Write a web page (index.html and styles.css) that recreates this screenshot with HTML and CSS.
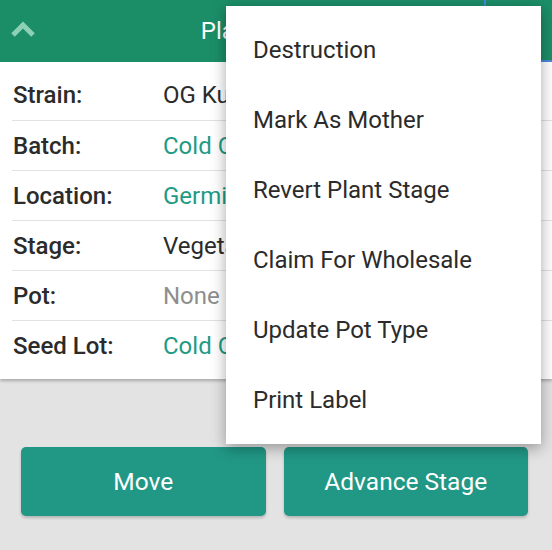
FILE: index.html
```html
<!DOCTYPE html>
<html>
<head>
<meta charset="utf-8">
<link rel="stylesheet" href="styles.css">
</head>
<body>
<div class="page">
  <header class="header">
    <svg class="chev" width="24" height="16" viewBox="0 0 24 16"><path d="M2 14 L12 4 L22 14" fill="none" stroke="#8ed0b6" stroke-width="5"/></svg>
    <div class="title">Plant Details</div>
    <div class="menu-btn"></div>
  </header>
  <section class="card">
    <div class="row"><span class="label">Strain:</span><span class="value">OG Kush</span></div>
    <div class="row"><span class="label">Batch:</span><span class="value link">Cold Creek</span></div>
    <div class="row"><span class="label">Location:</span><span class="value link">Germination</span></div>
    <div class="row"><span class="label">Stage:</span><span class="value">Vegetative</span></div>
    <div class="row"><span class="label">Pot:</span><span class="value muted">None</span></div>
    <div class="row"><span class="label">Seed Lot:</span><span class="value link">Cold Creek</span></div>
  </section>
  <div class="actions">
    <button class="btn">Move</button>
    <button class="btn">Advance Stage</button>
  </div>
  <ul class="menu">
    <li>Destruction</li>
    <li>Mark As Mother</li>
    <li>Revert Plant Stage</li>
    <li>Claim For Wholesale</li>
    <li>Update Pot Type</li>
    <li>Print Label</li>
  </ul>
</div>
</body>
</html>
```
FILE: styles.css
```css
html, body {
  margin: 0;
  padding: 0;
  background: #e3e3e3;
  font-family: Roboto, "Noto Sans", sans-serif;
}
.page {
  position: relative;
  width: 552px;
  height: 550px;
  overflow: hidden;
}
.header {
  height: 62px;
  background: #1b8e68;
  display: flex;
  align-items: center;
  position: relative;
}
.chev {
  margin-left: 11px;
  margin-top: -4px;
}
.title {
  position: absolute;
  left: 0;
  right: 0;
  text-align: center;
  color: #fff;
  font-size: 24px;
  padding-right: 16px;
}
.menu-btn {
  position: absolute;
  left: 484px;
  top: 0;
  width: 68px;
  height: 60px;
  border-left: 2px solid #4a86e0;
  border-bottom: 2px solid #4a86e0;
}
.card {
  background: #fff;
  padding: 8px 0 9px 12px;
  box-shadow: 0 2px 3px rgba(0,0,0,0.25);
}
.row {
  height: 50px;
  display: flex;
  align-items: center;
  font-size: 24px;
  color: #2b2b2b;
}
.row + .row {
  border-top: 1px solid #e2e2e2;
  height: 49px;
}
.label {
  width: 150px;
  font-weight: 500;
  padding-left: 1px;
}
.value { font-weight: 400; }
.link { color: #1f9a85; }
.muted { color: #8e8e8e; }
.actions {
  display: flex;
  gap: 18px;
  padding: 68px 24px 0 21px;
}
.btn {
  flex: 1;
  height: 69px;
  border: 0;
  border-radius: 5px;
  background: #219885;
  color: #fff;
  font-family: Roboto, sans-serif;
  font-size: 24.5px;
  box-shadow: 0 2px 3px rgba(0,0,0,0.2);
}
.menu {
  position: absolute;
  left: 226px;
  top: 6px;
  width: 315px;
  margin: 0;
  padding: 9px 0;
  list-style: none;
  background: #fff;
  box-shadow: 0 4px 14px rgba(0,0,0,0.35);
}
.menu li {
  height: 70px;
  line-height: 70px;
  padding-left: 27px;
  font-size: 24px;
  color: #2b2b2b;
}
```
